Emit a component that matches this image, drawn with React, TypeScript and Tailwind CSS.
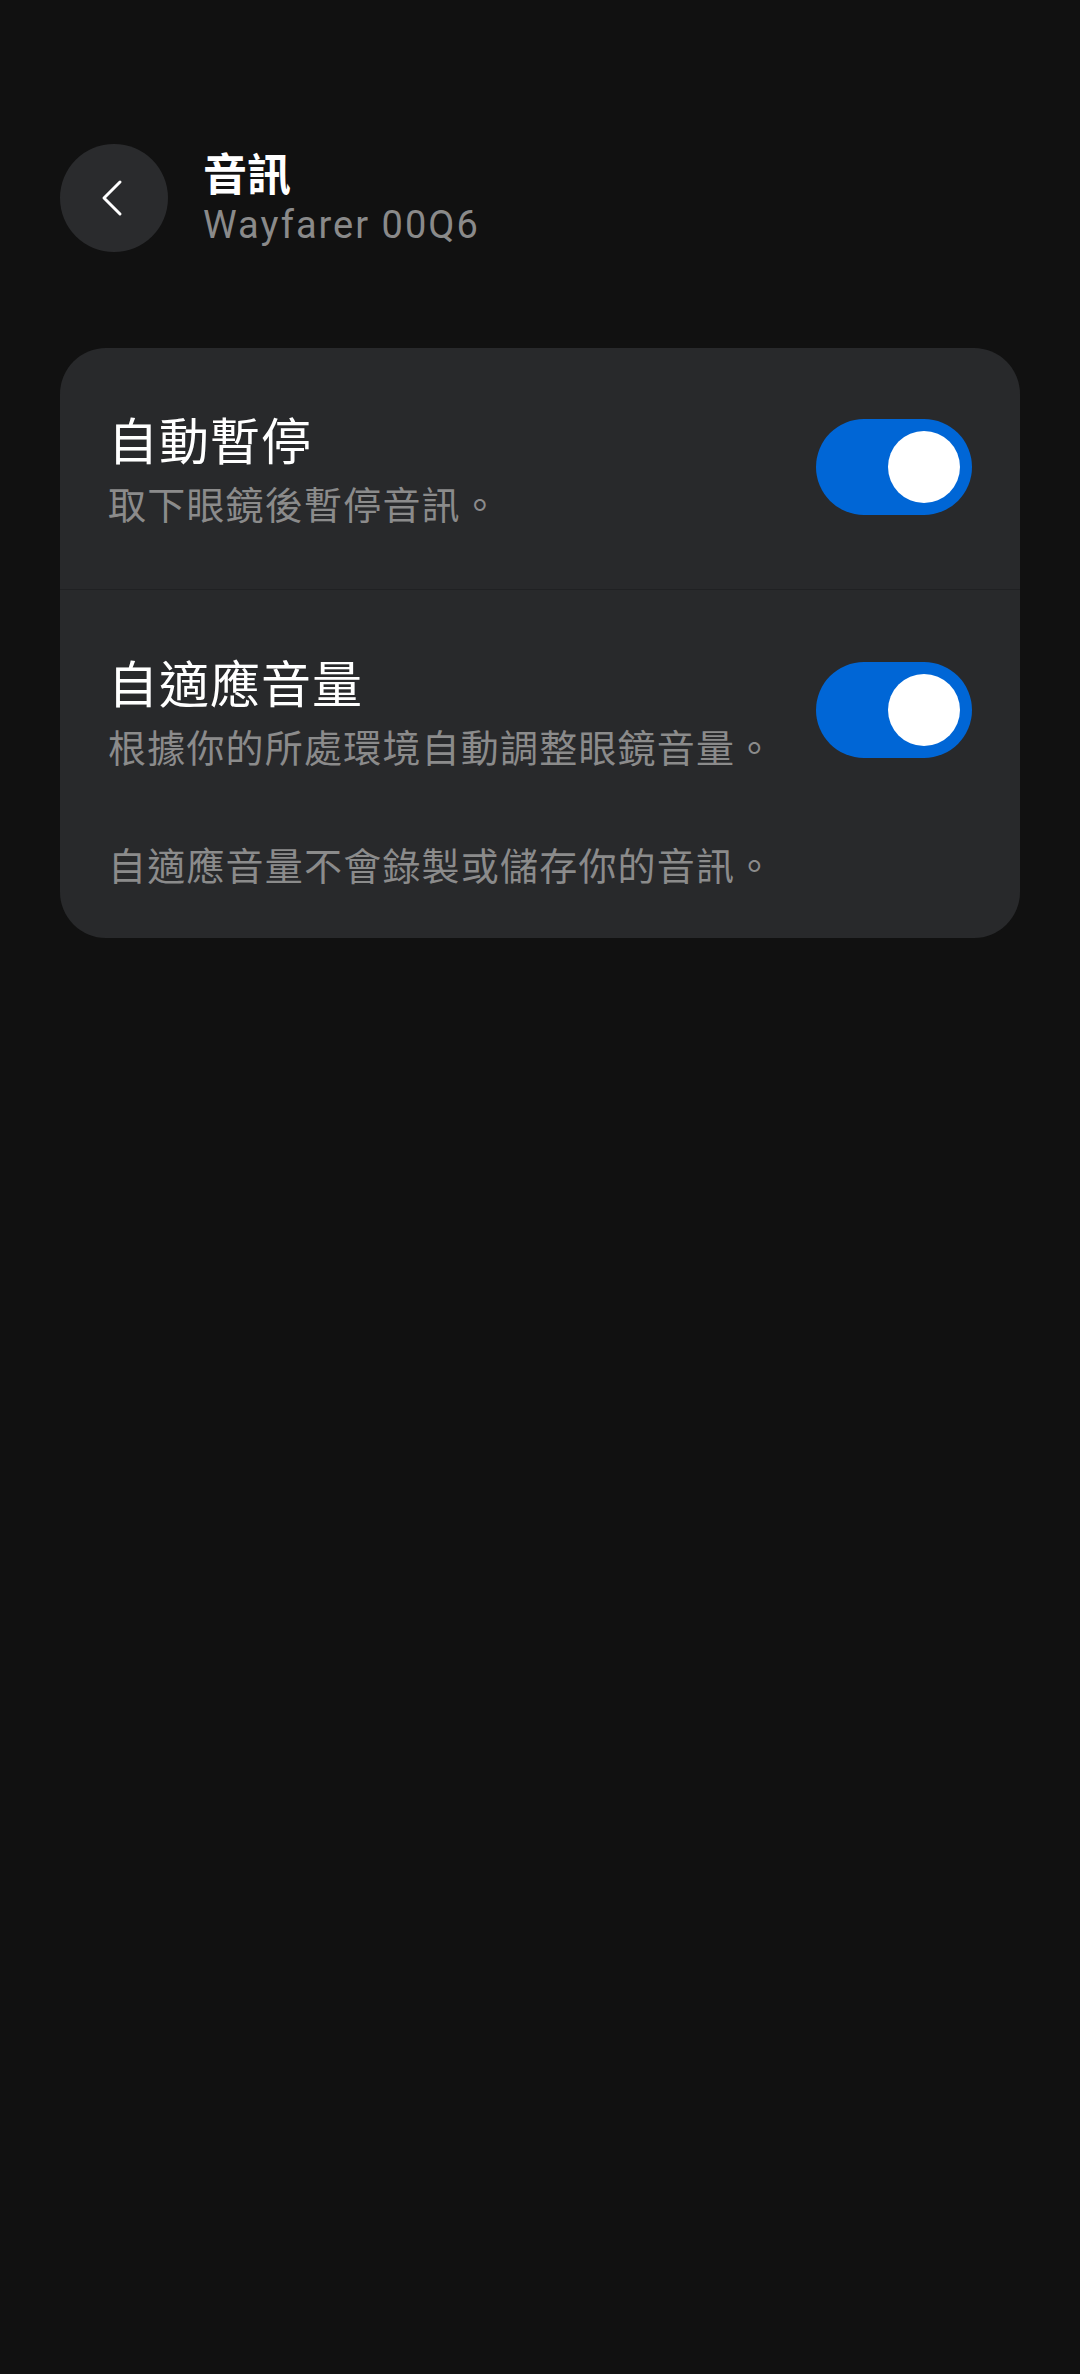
const cjk = { fontFamily: '"Noto Sans CJK TC", "Noto Sans", sans-serif' }

const Toggle = ({ on }: { on: boolean }) => (
  <div
    className={`flex h-[96px] w-[156px] shrink-0 items-center rounded-full px-[12px] ${
      on ? "justify-end bg-[#0066d6]" : "justify-start bg-[#555]"
    }`}
  >
    <div className="h-[72px] w-[72px] rounded-full bg-white" />
  </div>
)

const SettingRow = ({ title, desc, on }: { title: string; desc: string; on: boolean }) => (
  <div className="flex items-center justify-between gap-6">
    <div className="flex flex-col gap-[5px]">
      <h2 className="text-[50px] leading-[68px] tracking-[1px] text-white">{title}</h2>
      <p className="text-[38px] leading-[52px] tracking-[1.2px] text-[#8b8b8b]">{desc}</p>
    </div>
    <Toggle on={on} />
  </div>
)

export default function App() {
  return (
    <div className="min-h-[2374px] w-full bg-[#111111] px-[60px] pt-[144px]" style={cjk}>
      <header className="flex items-center gap-[35px]">
        <button
          aria-label="Back"
          className="flex h-[108px] w-[108px] items-center justify-center rounded-full bg-[#2a2b2d] text-white"
        >
          <svg width="24" height="38" viewBox="0 0 24 38" fill="none" className="-ml-[4px]">
            <path d="M20 3 L4 19 L20 35" stroke="currentColor" strokeWidth="3" strokeLinecap="round" strokeLinejoin="round" />
          </svg>
        </button>
        <div className="flex flex-col gap-[5px]">
          <h1 className="-mt-[4px] text-[44px] font-bold leading-[52px] text-white">音訊</h1>
          <p
            className="text-[38px] leading-[44px] tracking-[2px] text-[#8a8a8a]"
            style={{ fontFamily: 'Roboto, "Noto Sans", sans-serif' }}
          >
            Wayfarer 00Q6
          </p>
        </div>
      </header>

      <section className="mt-[96px] overflow-hidden rounded-[46px] bg-[#28292b]">
        <div className="px-[48px] pt-[56px] pb-[60px]">
          <SettingRow title="自動暫停" desc="取下眼鏡後暫停音訊。" on />
        </div>
        <div className="h-px bg-[#202123]" />
        <div className="px-[48px] pt-[57px] pb-[48px]">
          <SettingRow title="自適應音量" desc="根據你的所處環境自動調整眼鏡音量。" on />
          <p className="mt-[66px] text-[38px] leading-[52px] tracking-[1.2px] text-[#8b8b8b]">
            自適應音量不會錄製或儲存你的音訊。
          </p>
        </div>
      </section>
    </div>
  )
}
